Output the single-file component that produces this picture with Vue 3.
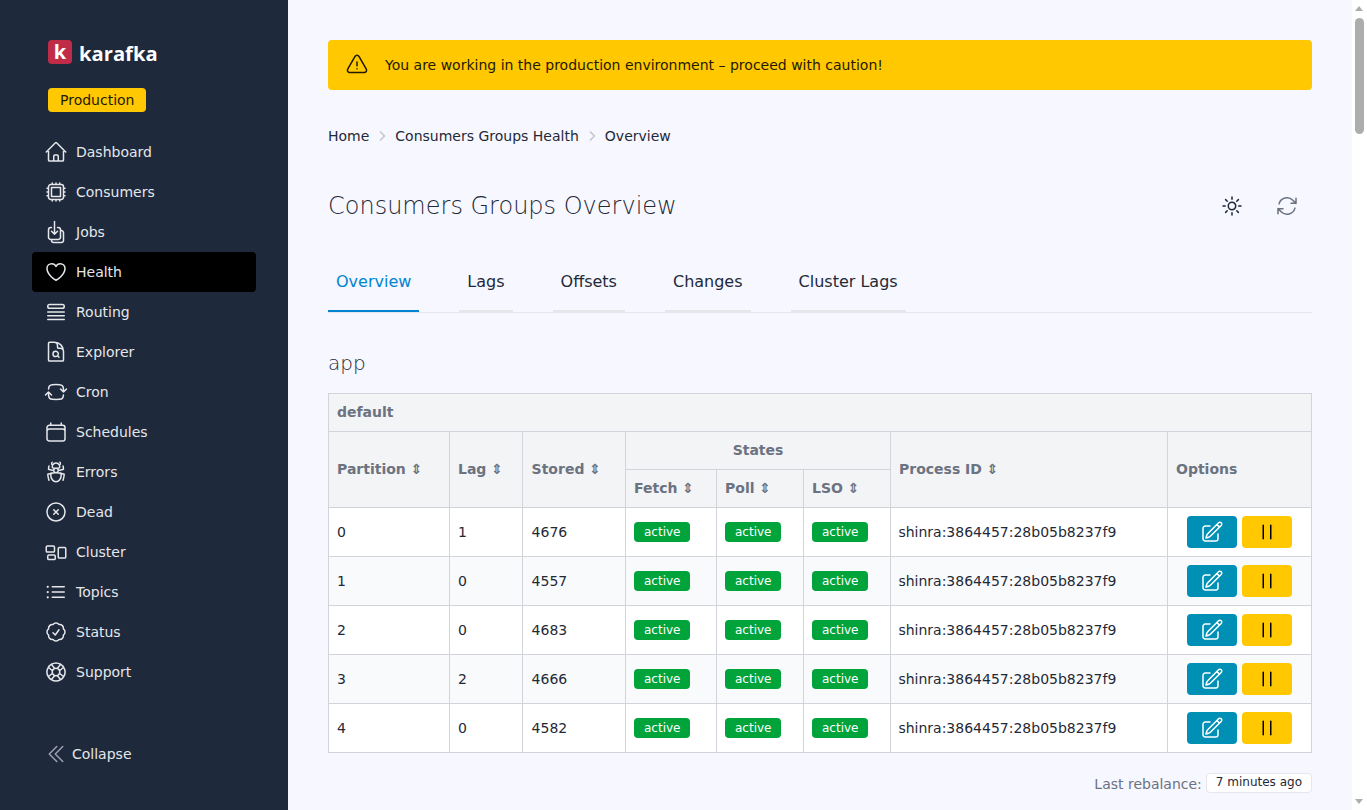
<script setup>
const navItems = [
  { label: 'Dashboard', d: 'M2.25 12l8.954-8.955c.44-.439 1.152-.439 1.591 0L21.75 12M4.5 9.75v10.125c0 .621.504 1.125 1.125 1.125H9.75v-4.875c0-.621.504-1.125 1.125-1.125h2.25c.621 0 1.125.504 1.125 1.125V21h4.125c.621 0 1.125-.504 1.125-1.125V9.75M8.25 21h8.25' },
  { label: 'Consumers', d: 'M8.25 3v1.5M4.5 8.25H3m18 0h-1.5M4.5 12H3m18 0h-1.5m-15 3.75H3m18 0h-1.5M8.25 19.5V21M12 3v1.5m0 15V21m3.75-18v1.5m0 15V21m-9-1.5h10.5a2.25 2.25 0 002.25-2.25V6.75a2.25 2.25 0 00-2.25-2.25H6.75A2.25 2.25 0 004.5 6.75v10.5a2.25 2.25 0 002.25 2.25zm.75-12h9v9h-9v-9z' },
  { label: 'Jobs', d: 'M7.5 7.5h-.75A2.25 2.25 0 004.5 9.75v7.5a2.25 2.25 0 002.25 2.25h7.5a2.25 2.25 0 002.25-2.25v-7.5a2.25 2.25 0 00-2.25-2.25h-.75m-6 3.75l3 3m0 0l3-3m-3 3V1.5m6 9h.75a2.25 2.25 0 012.25 2.25v7.5a2.25 2.25 0 01-2.25 2.25h-7.5a2.25 2.25 0 01-2.25-2.25v-.75' },
  { label: 'Health', active: true, d: 'M21 8.25c0-2.485-2.099-4.5-4.688-4.5-1.935 0-3.597 1.126-4.312 2.733-.715-1.607-2.377-2.733-4.313-2.733C5.1 3.75 3 5.765 3 8.25c0 7.22 9 12 9 12s9-4.78 9-12z' },
  { label: 'Routing', d: 'M3.75 12h16.5m-16.5 3.75h16.5M3.75 19.5h16.5M5.625 4.5h12.75a1.875 1.875 0 010 3.75H5.625a1.875 1.875 0 010-3.75z' },
  { label: 'Explorer', d: 'M19.5 14.25v-2.625a3.375 3.375 0 00-3.375-3.375h-1.5A1.125 1.125 0 0113.5 7.125v-1.5a3.375 3.375 0 00-3.375-3.375H8.25m5.231 13.481L15 17.25m-4.5-15H5.625c-.621 0-1.125.504-1.125 1.125v16.5c0 .621.504 1.125 1.125 1.125h12.75c.621 0 1.125-.504 1.125-1.125V11.25a9 9 0 00-9-9zm3.75 11.625a2.625 2.625 0 11-5.25 0 2.625 2.625 0 015.25 0z' },
  { label: 'Cron', d: 'M19.5 12c0-1.232-.046-2.453-.138-3.662a4.006 4.006 0 00-3.7-3.7 48.678 48.678 0 00-7.324 0 4.006 4.006 0 00-3.7 3.7c-.017.22-.032.441-.046.662M19.5 12l3-3m-3 3l-3-3m-12 3c0 1.232.046 2.453.138 3.662a4.006 4.006 0 003.7 3.7 48.656 48.656 0 007.324 0 4.006 4.006 0 003.7-3.7c.017-.22.032-.441.046-.662M4.5 12l3 3m-3-3l-3 3' },
  { label: 'Schedules', d: 'M6.75 3v2.25M17.25 3v2.25M3 18.75V7.5a2.25 2.25 0 012.25-2.25h13.5A2.25 2.25 0 0121 7.5v11.25m-18 0A2.25 2.25 0 005.25 21h13.5A2.25 2.25 0 0021 18.75m-18 0v-7.5A2.25 2.25 0 015.25 9h13.5A2.25 2.25 0 0121 11.25v7.5' },
  { label: 'Errors', d: 'M12 12.75c1.148 0 2.278.08 3.383.237 1.037.146 1.866.966 1.866 2.013 0 3.728-2.35 6.75-5.25 6.75S6.75 18.728 6.75 15c0-1.046.83-1.867 1.866-2.013A24.204 24.204 0 0112 12.75zm0 0c2.883 0 5.647.508 8.207 1.44a23.91 23.91 0 01-1.152 6.06M12 12.75c-2.883 0-5.647.508-8.208 1.44.125 2.104.52 4.136 1.153 6.06M12 12.75a2.25 2.25 0 002.248-2.354M12 12.75a2.25 2.25 0 01-2.248-2.354M12 8.25c.995 0 1.971-.08 2.922-.236.403-.066.74-.358.795-.762a3.778 3.778 0 00-.399-2.25M12 8.25c-.995 0-1.97-.08-2.922-.236-.402-.066-.74-.358-.795-.762a3.734 3.734 0 01.4-2.253M12 8.25a2.25 2.25 0 00-2.248 2.146M12 8.25a2.25 2.25 0 012.248 2.146M8.683 5a6.032 6.032 0 01-1.155-1.002c.07-.63.27-1.222.574-1.747m.581 2.749A3.75 3.75 0 0115.318 5m0 0c.427-.283.815-.62 1.155-.999a4.471 4.471 0 00-.575-1.752M4.921 6a24.048 24.048 0 00-.392 3.314c1.668.546 3.416.914 5.223 1.082M19.08 6c.205 1.08.337 2.187.392 3.314a23.882 23.882 0 01-5.223 1.082' },
  { label: 'Dead', d: 'M9.75 9.75l4.5 4.5m0-4.5l-4.5 4.5M21 12a9 9 0 11-18 0 9 9 0 0118 0z' },
  { label: 'Cluster', d: 'M2.25 7.125C2.25 6.504 2.754 6 3.375 6h6c.621 0 1.125.504 1.125 1.125v3.75c0 .621-.504 1.125-1.125 1.125h-6a1.125 1.125 0 01-1.125-1.125v-3.75zM14.25 8.625c0-.621.504-1.125 1.125-1.125h5.25c.621 0 1.125.504 1.125 1.125v8.25c0 .621-.504 1.125-1.125 1.125h-5.25a1.125 1.125 0 01-1.125-1.125v-8.25zM3.75 16.125c0-.621.504-1.125 1.125-1.125h5.25c.621 0 1.125.504 1.125 1.125v2.25c0 .621-.504 1.125-1.125 1.125h-5.25a1.125 1.125 0 01-1.125-1.125v-2.25z' },
  { label: 'Topics', d: 'M8.25 6.75h12M8.25 12h12m-12 5.25h12M3.75 6.75h.007v.008H3.75V6.75zm.375 0a.375.375 0 11-.75 0 .375.375 0 01.75 0zM3.75 12h.007v.008H3.75V12zm.375 0a.375.375 0 11-.75 0 .375.375 0 01.75 0zm-.375 5.25h.007v.008H3.75v-.008zm.375 0a.375.375 0 11-.75 0 .375.375 0 01.75 0z' },
  { label: 'Status', d: 'M9 12.75L11.25 15 15 9.75M21 12c0 1.268-.63 2.39-1.593 3.068a3.745 3.745 0 01-1.043 3.296 3.745 3.745 0 01-3.296 1.043A3.745 3.745 0 0112 21c-1.268 0-2.39-.63-3.068-1.593a3.746 3.746 0 01-3.296-1.043 3.745 3.745 0 01-1.043-3.296A3.745 3.745 0 013 12c0-1.268.63-2.39 1.593-3.068a3.745 3.745 0 011.043-3.296 3.746 3.746 0 013.296-1.043A3.746 3.746 0 0112 3c1.268 0 2.39.63 3.068 1.593a3.746 3.746 0 013.296 1.043 3.746 3.746 0 011.043 3.296A3.745 3.745 0 0121 12z' },
  { label: 'Support', d: 'M16.712 4.33a9.027 9.027 0 011.652 1.306c.51.51.944 1.064 1.306 1.652M16.712 4.33l-3.448 4.138m3.448-4.138a9.014 9.014 0 00-9.424 0M19.67 7.288l-4.138 3.448m4.138-3.448a9.014 9.014 0 010 9.424m-4.138-5.976a3.736 3.736 0 00-.88-1.388 3.737 3.737 0 00-1.388-.88m2.268 2.268a3.765 3.765 0 010 2.528m-2.268-4.796a3.765 3.765 0 00-2.528 0m4.796 4.796c-.181.506-.475.982-.88 1.388a3.736 3.736 0 01-1.388.88m2.268-2.268l4.138 3.448m0 0a9.027 9.027 0 01-1.306 1.652c-.51.51-1.064.944-1.652 1.306m0 0l-3.448-4.138m3.448 4.138a9.014 9.014 0 01-9.424 0m5.976-4.138a3.765 3.765 0 01-2.528 0m0 0a3.736 3.736 0 01-1.388-.88 3.737 3.737 0 01-.88-1.388m2.268 2.268L7.288 19.67m0 0a9.024 9.024 0 01-1.652-1.306 9.027 9.027 0 01-1.306-1.652m0 0l4.138-3.448M4.33 16.712a9.014 9.014 0 010-9.424m4.138 5.976a3.765 3.765 0 010-2.528m0 0c.181-.506.475-.982.88-1.388a3.736 3.736 0 011.388-.88m-2.268 2.268L4.33 7.288m6.406 1.18L7.288 4.33m0 0a9.024 9.024 0 00-1.652 1.306A9.025 9.025 0 004.33 7.288' },
];

const tabs = ['Overview', 'Lags', 'Offsets', 'Changes', 'Cluster Lags'];
const colWidths = [121, 73, 103, 91, 87, 87, 277, 144];

const rows = [
  { partition: 0, lag: 1, stored: 4676 },
  { partition: 1, lag: 0, stored: 4557 },
  { partition: 2, lag: 0, stored: 4683 },
  { partition: 3, lag: 2, stored: 4666 },
  { partition: 4, lag: 0, stored: 4582 },
];
</script>

<template>
  <div class="layout">
    <aside class="sidebar">
      <div class="logo">
        <span class="logo-mark">k</span>
        <span class="logo-text">karafka</span>
      </div>
      <div class="env-badge">Production</div>
      <nav class="nav">
        <a v-for="item in navItems" :key="item.label" class="nav-item" :class="{ active: item.active }">
          <svg class="icon" viewBox="0 0 24 24" fill="none" stroke="currentColor" stroke-width="1.5" stroke-linecap="round" stroke-linejoin="round"><path :d="item.d" /></svg>
          <span>{{ item.label }}</span>
        </a>
      </nav>
      <a class="collapse">
        <svg class="icon collapse-icon" viewBox="0 0 24 24" fill="none" stroke="currentColor" stroke-width="1.5" stroke-linecap="round" stroke-linejoin="round"><path d="M18.75 19.5l-7.5-7.5 7.5-7.5m-6 15L5.25 12l7.5-7.5" /></svg>
        <span>Collapse</span>
      </a>
    </aside>

    <main class="main">
      <div class="alert">
        <svg class="icon" viewBox="0 0 24 24" fill="none" stroke="currentColor" stroke-width="1.5" stroke-linecap="round" stroke-linejoin="round"><path d="M12 9v3.75m-9.303 3.376c-.866 1.5.217 3.374 1.948 3.374h14.71c1.73 0 2.813-1.874 1.948-3.374L13.949 3.378c-.866-1.5-3.032-1.5-3.898 0L2.697 16.126zM12 15.75h.007v.008H12v-.008z" /></svg>
        <span>You are working in the production environment – proceed with caution!</span>
      </div>

      <div class="breadcrumbs">
        <span>Home</span>
        <svg class="crumb-sep" viewBox="0 0 12 12" fill="none" stroke="currentColor" stroke-width="1.5"><path d="M4 1.5 8.5 6 4 10.5" /></svg>
        <span>Consumers Groups Health</span>
        <svg class="crumb-sep" viewBox="0 0 12 12" fill="none" stroke="currentColor" stroke-width="1.5"><path d="M4 1.5 8.5 6 4 10.5" /></svg>
        <span>Overview</span>
      </div>

      <div class="page-head">
        <h1>Consumers Groups Overview</h1>
        <div class="head-actions">
          <svg class="icon sun" viewBox="0 0 24 24" fill="none" stroke="currentColor" stroke-width="1.5" stroke-linecap="round" stroke-linejoin="round"><path d="M12 3v2.25m6.364.386l-1.591 1.591M21 12h-2.25m-.386 6.364l-1.591-1.591M12 18.75V21m-4.773-4.227l-1.591 1.591M5.25 12H3m4.227-4.773L5.636 5.636M15.75 12a3.75 3.75 0 11-7.5 0 3.75 3.75 0 017.5 0z" /></svg>
          <svg class="icon refresh" viewBox="0 0 24 24" fill="none" stroke="currentColor" stroke-width="1.5" stroke-linecap="round" stroke-linejoin="round"><path d="M16.023 9.348h4.992v-.001M2.985 19.644v-4.992m0 0h4.992m-4.993 0l3.181 3.183a8.25 8.25 0 0013.803-3.7M4.031 9.865a8.25 8.25 0 0113.803-3.7l3.181 3.182m0-4.991v4.99" /></svg>
        </div>
      </div>

      <div class="tabs">
        <a v-for="(tab, i) in tabs" :key="tab" class="tab" :class="{ active: i === 0 }">{{ tab }}</a>
      </div>

      <h2>app</h2>

      <table class="data-table">
        <colgroup>
          <col v-for="(w, i) in colWidths" :key="i" :style="{ width: w + 'px' }" />
        </colgroup>
        <thead>
          <tr>
            <th colspan="8">default</th>
          </tr>
          <tr>
            <th rowspan="2">Partition <span class="sort">⇕</span></th>
            <th rowspan="2">Lag <span class="sort">⇕</span></th>
            <th rowspan="2" class="col-stored">Stored <span class="sort">⇕</span></th>
            <th colspan="3" class="center">States</th>
            <th rowspan="2">Process ID <span class="sort">⇕</span></th>
            <th rowspan="2">Options</th>
          </tr>
          <tr>
            <th>Fetch <span class="sort">⇕</span></th>
            <th>Poll <span class="sort">⇕</span></th>
            <th>LSO <span class="sort">⇕</span></th>
          </tr>
        </thead>
        <tbody>
          <tr v-for="row in rows" :key="row.partition">
            <td>{{ row.partition }}</td>
            <td>{{ row.lag }}</td>
            <td class="col-stored">{{ row.stored }}</td>
            <td><span class="badge">active</span></td>
            <td><span class="badge">active</span></td>
            <td><span class="badge">active</span></td>
            <td class="col-process">shinra:3864457:28b05b8237f9</td>
            <td class="options">
              <button class="btn btn-info">
                <svg class="icon" viewBox="0 0 24 24" fill="none" stroke="currentColor" stroke-width="1.5" stroke-linecap="round" stroke-linejoin="round"><path d="M16.862 4.487l1.687-1.688a1.875 1.875 0 112.652 2.652L10.582 16.07a4.5 4.5 0 01-1.897 1.13L6 18l.8-2.685a4.5 4.5 0 011.13-1.897l8.932-8.931zm0 0L19.5 7.125M18 14v4.75A2.25 2.25 0 0115.75 21H5.25A2.25 2.25 0 013 18.75V8.25A2.25 2.25 0 015.25 6H10" /></svg>
              </button>
              <button class="btn btn-warn">
                <svg class="icon" viewBox="0 0 24 24" fill="none" stroke="currentColor" stroke-width="1.5" stroke-linecap="round" stroke-linejoin="round"><path d="M15.75 5.25v13.5m-7.5-13.5v13.5" /></svg>
              </button>
            </td>
          </tr>
        </tbody>
      </table>

      <div class="rebalance">
        <span class="rebalance-label">Last rebalance:</span>
        <span class="time-badge">7 minutes ago</span>
      </div>
    </main>

    <div class="scrollbar">
      <span class="arrow arrow-up"></span>
      <span class="thumb"></span>
      <span class="arrow arrow-down"></span>
    </div>
  </div>
</template>

<style scoped>
.layout {
  display: flex;
  height: 100vh;
  overflow: hidden;
}

.sidebar {
  flex: 0 0 288px;
  box-sizing: border-box;
  padding-top: 40px;
  display: flex;
  flex-direction: column;
  background: #1e293b;
  color: #e5e7eb;
  font-size: 14px;
}

.logo {
  display: flex;
  align-items: center;
  gap: 7px;
  height: 24px;
  margin-left: 48px;
}

.logo-mark {
  width: 24px;
  height: 24px;
  border-radius: 4px;
  background: #c02c48;
  color: #fff;
  font-family: "Open Sans", sans-serif;
  font-weight: 700;
  font-size: 20px;
  line-height: 24px;
  text-align: center;
}

.logo-text {
  padding-top: 2px;
  color: #fff;
  font-family: "Open Sans", sans-serif;
  font-weight: 700;
  font-size: 20.2px;
  line-height: 24px;
}

.env-badge {
  align-self: flex-start;
  margin: 24px 0 0 48px;
  height: 24px;
  padding: 0 12px;
  line-height: 24px;
  border-radius: 4px;
  background: #ffc800;
  color: #1f1a00;
}

.nav {
  margin: 20px 32px 0;
  display: flex;
  flex-direction: column;
}

.nav-item {
  display: flex;
  align-items: center;
  gap: 8px;
  height: 40px;
  padding-left: 12px;
  border-radius: 4px;
}

.nav-item.active {
  background: #000;
}

.icon {
  width: 24px;
  height: 24px;
  flex: none;
}

.collapse {
  margin-top: auto;
  margin-bottom: 40px;
  margin-left: 44px;
  height: 32px;
  display: flex;
  align-items: center;
  gap: 4px;
}

.collapse-icon {
  color: #9ca3af;
}

.main {
  flex: 1;
  min-width: 0;
  padding: 40px;
  color: #1f2937;
  font-size: 14px;
}

.alert {
  height: 50px;
  box-sizing: border-box;
  padding-left: 17px;
  display: flex;
  align-items: center;
  gap: 16px;
  border-radius: 4px;
  background: #ffc800;
  color: #1f1a00;
}

.breadcrumbs {
  margin-top: 36px;
  height: 20px;
  display: flex;
  align-items: center;
  gap: 7px;
}

.crumb-sep {
  width: 12px;
  height: 12px;
  color: #c3c6cd;
}

.page-head {
  margin-top: 44px;
  height: 32px;
  display: flex;
  align-items: center;
  justify-content: space-between;
}

h1 {
  margin: 0;
  font-size: 24px;
  font-weight: 200;
  line-height: 32px;
  color: #1f2937;
}

.head-actions {
  display: flex;
  align-items: center;
  gap: 31px;
  margin-right: 13px;
}

.sun {
  color: #1f2937;
}

.refresh {
  color: #6b7280;
}

.tabs {
  margin-top: 40px;
  display: flex;
  gap: 40px;
  border-bottom: 1px solid #e5e7eb;
}

.tab {
  padding: 8px 8px 16px;
  font-size: 16px;
  line-height: 24px;
  border-bottom: 2px solid #e5e7eb;
}

.tab.active {
  color: #0284d0;
  border-bottom-color: #0284d0;
}

h2 {
  margin: 36px 0 16px;
  font-size: 20px;
  font-weight: 200;
  line-height: 28px;
  color: #1f2937;
}

.data-table {
  width: 983px;
  table-layout: fixed;
  border-collapse: collapse;
}

th, td {
  box-sizing: border-box;
  border: 1px solid #d1d5db;
  padding: 0 8px;
  text-align: left;
}

th {
  height: 38px;
  padding-bottom: 2px;
  background: #f3f4f6;
  color: #6b7280;
  font-weight: 700;
}

th.center {
  text-align: center;
}

td {
  height: 49px;
  background: #fff;
}

th.col-stored, td.col-stored {
  padding-left: 8.6px;
}

td.col-process {
  padding-left: 7.4px;
}

tbody tr:nth-child(even) td {
  background: #f9fafb;
}

.badge {
  display: inline-block;
  height: 20px;
  padding: 0 10px;
  line-height: 20px;
  border-radius: 4px;
  background: #00a43b;
  color: #fff;
  font-size: 12px;
  vertical-align: middle;
}

.options {
  padding: 0;
  text-align: center;
  font-size: 0;
}

.btn {
  width: 50px;
  height: 32px;
  padding: 0;
  border: none;
  border-radius: 4px;
  display: inline-flex;
  align-items: center;
  justify-content: center;
  vertical-align: middle;
}

.btn + .btn {
  margin-left: 5px;
}

.btn-info {
  background: #0090b5;
  color: #fff;
}

.btn-warn {
  background: #ffc800;
  color: #000;
}

.rebalance {
  margin-top: 20px;
  display: flex;
  align-items: center;
  justify-content: flex-end;
  gap: 4px;
  color: #6b7280;
}

.rebalance-label {
  padding-top: 2px;
}

.time-badge {
  height: 20px;
  box-sizing: border-box;
  padding: 0 9px;
  line-height: 16px;
  border: 1px solid #e5e7eb;
  border-radius: 4px;
  background: #fff;
  color: #1f2937;
  font-size: 12px;
}

/* page scrollbar, the headless browser does not paint a real one */
.scrollbar {
  flex: 0 0 15px;
  position: relative;
  background: #fff;
}

.thumb {
  position: absolute;
  top: 18px;
  left: 3px;
  width: 9px;
  height: 116px;
  border-radius: 5px;
  background: #adadb0;
}

.arrow {
  position: absolute;
  left: 3px;
  width: 0;
  height: 0;
  border-left: 4.5px solid transparent;
  border-right: 4.5px solid transparent;
}

.arrow-up {
  top: 6px;
  border-bottom: 5px solid #adadb0;
}

.arrow-down {
  bottom: 6px;
  border-top: 5px solid #adadb0;
}
</style>

<style>
body {
  background: #f6f7ff;
  font-family: "DejaVu Sans", sans-serif;
}
</style>
